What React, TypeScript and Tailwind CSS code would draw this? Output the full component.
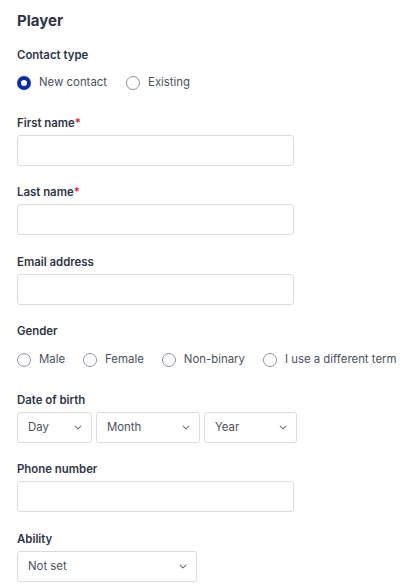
import React from 'react';

const labelCls = "block text-[11.4px] leading-4 font-semibold text-[#2d3648]";

function Radio({ label, checked = false }: { label: string; checked?: boolean }) {
  return (
    <label className="flex items-center gap-2 h-5">
      {checked ? (
        <span className="w-[14px] h-[14px] rounded-full border-[4px] border-[#0a2ea6] bg-white box-border" />
      ) : (
        <span className="w-[14px] h-[14px] rounded-full border-[1.5px] border-[#8c93a0] bg-white box-border" />
      )}
      <span className="text-[11.4px] text-[#4a5160]">{label}</span>
    </label>
  );
}

function Chevron() {
  return (
    <svg width="8" height="5" viewBox="0 0 8 5" fill="none" className="shrink-0">
      <path d="M1.2 1.2l2.8 2.6 2.8-2.6" stroke="#6b7280" strokeWidth="1.1" strokeLinecap="round" strokeLinejoin="round" />
    </svg>
  );
}

function Select({ value, width }: { value: string; width: string }) {
  return (
    <div className={`${width} h-[31px] flex items-center justify-between pl-[10px] pr-[9px] border border-[#dcdcdc] rounded-[3px] bg-white`}>
      <span className="text-[11.4px] text-[#4a5160]">{value}</span>
      <Chevron />
    </div>
  );
}

function TextField({ label, required = false, className = "" }: { label: string; required?: boolean; className?: string }) {
  return (
    <div className={className}>
      <div className={labelCls}>
        {label}
        {required && <span className="text-[#e0182d]">*</span>}
      </div>
      <input
        type="text"
        className="mt-1 block w-[277px] h-[31px] border border-[#dcdcdc] rounded-[3px] bg-white px-2 text-[12px] outline-none"
      />
    </div>
  );
}

export default function App() {
  return (
    <div className="min-h-[584px] bg-white pl-[17px] pt-[9px] font-['Inter',sans-serif]">
      <h2 className="text-[15px] leading-6 font-bold text-[#2d3648]">Player</h2>

      <div className="mt-[14px]">
        <div className={labelCls}>Contact type</div>
        <div className="mt-[10px] flex items-center gap-[19px]">
          <Radio label="New contact" checked />
          <Radio label="Existing" />
        </div>
      </div>

      <TextField label="First name" required className="mt-[22px]" />
      <TextField label="Last name" required className="mt-[18px]" />
      <TextField label="Email address" className="mt-[19px]" />

      <div className="mt-[18px]">
        <div className={labelCls}>Gender</div>
        <div className="mt-[11px] flex items-center gap-[18px]">
          <Radio label="Male" />
          <Radio label="Female" />
          <Radio label="Non-binary" />
          <Radio label="I use a different term" />
        </div>
      </div>

      <div className="mt-[22px]">
        <div className={labelCls}>Date of birth</div>
        <div className="mt-1 flex gap-1">
          <Select value="Day" width="w-[75px]" />
          <Select value="Month" width="w-[104px]" />
          <Select value="Year" width="w-[93px]" />
        </div>
      </div>

      <TextField label="Phone number" className="mt-[18px]" />

      <div className="mt-[19px]">
        <div className={labelCls}>Ability</div>
        <div className="mt-1">
          <Select value="Not set" width="w-[180px]" />
        </div>
      </div>
    </div>
  );
}
